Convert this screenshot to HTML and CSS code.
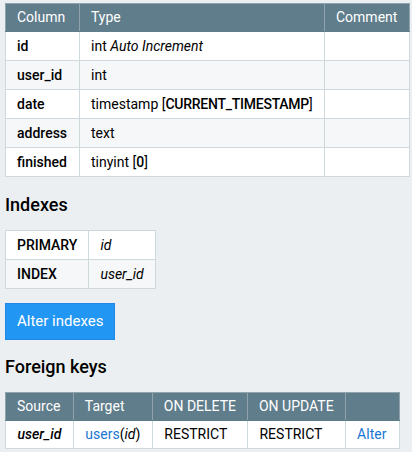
FILE: index.html
```html
<!DOCTYPE html>
<html>
<head>
<meta charset="utf-8">
<link rel="stylesheet" href="styles.css">
</head>
<body>
<table class="grid cols">
  <thead>
    <tr><th class="c-name">Column</th><th>Type</th><th class="c-comment">Comment</th></tr>
  </thead>
  <tbody>
    <tr><th>id</th><td>int <i>Auto Increment</i></td><td></td></tr>
    <tr><th>user_id</th><td>int</td><td></td></tr>
    <tr><th>date</th><td>timestamp [<b class="tight">CURRENT_TIMESTAMP</b>]</td><td></td></tr>
    <tr><th>address</th><td>text</td><td></td></tr>
    <tr><th>finished</th><td>tinyint [<b>0</b>]</td><td></td></tr>
  </tbody>
</table>

<h3 class="section">Indexes</h3>
<table class="grid idx">
  <tbody>
    <tr><th>PRIMARY</th><td><i>id</i></td></tr>
    <tr><th>INDEX</th><td><i>user_id</i></td></tr>
  </tbody>
</table>
<div class="actions"><a class="btn" href="#">Alter indexes</a></div>

<h3 class="section fk-title">Foreign keys</h3>
<table class="grid fk">
  <thead>
    <tr><th>Source</th><th>Target</th><th>ON DELETE</th><th>ON UPDATE</th><th class="c-alter"></th></tr>
  </thead>
  <tbody>
    <tr><th><i>user_id</i></th><td><a href="#">users</a>(<i>id</i>)</td><td>RESTRICT</td><td>RESTRICT</td><td><a href="#">Alter</a></td></tr>
  </tbody>
</table>
</body>
</html>
```
FILE: styles.css
```css
html, body {
  margin: 0;
  background: #eceff1;
}
body {
  padding: 3px 2px 0 5px;
  font-family: Roboto, "Liberation Sans", sans-serif;
  font-size: 14px;
  color: #000;
}
b { font-weight: 500; }
.tight { letter-spacing: -0.25px; }
.grid {
  border-collapse: collapse;
  border: 1px solid #90a4ae;
  background: #fff;
}
.grid th, .grid td {
  border: 1px solid #cfd8dc;
  padding: 5px 11px;
  line-height: 17px;
  text-align: left;
  vertical-align: middle;
  white-space: nowrap;
}
.grid tbody th {
  font-weight: 500;
}
.grid thead th {
  background: #607d8b;
  color: #fff;
  font-weight: normal;
  border-color: #90a4ae;
  border-bottom-color: #607d8b;
  padding: 5px 11px;
  height: 17px;
}
.grid tbody tr:nth-child(even) th,
.grid tbody tr:nth-child(even) td {
  background: #f5f7f8;
}
.cols { width: 405px; }
.cols tbody th, .cols tbody td { height: 18px; }
.c-name { width: 51px; }
.c-comment { width: 62px; }
.section {
  margin: 17px 0 14px;
  font-size: 18px;
  font-weight: 500;
  line-height: 22px;
}
.idx th, .idx td { height: 18px; }
.actions {
  margin-top: 14px;
}
.btn {
  display: inline-block;
  background: #2196f3;
  color: #fff;
  text-decoration: none;
  padding: 8px 11px;
  line-height: 19px;
  font-size: 15px;
  border: 1px solid #1e88e5;
}
.fk-title { margin-top: 16px; }
.grid a { color: #1976d2; text-decoration: none; }
.fk th, .fk td { padding-left: 11.5px; padding-right: 11.5px; }
.fk td, .fk tbody th { height: 17px; }
.c-alter { width: 31px; }
```
